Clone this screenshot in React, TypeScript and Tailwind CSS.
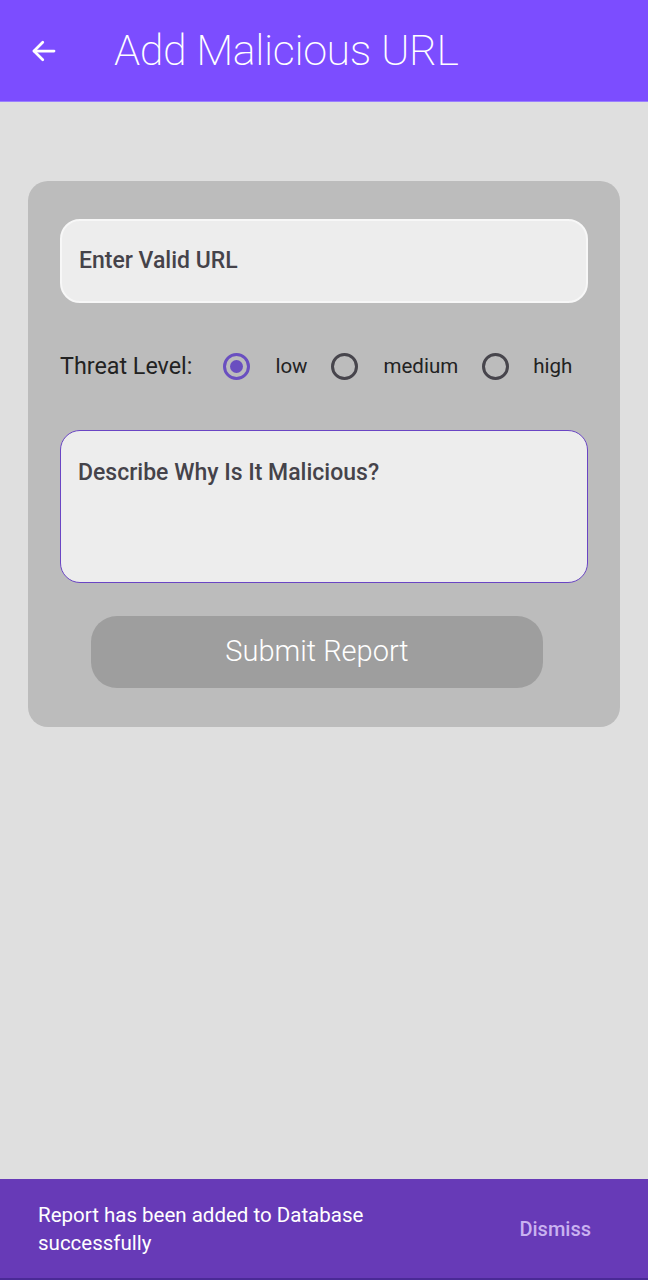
import React from "react";

function Radio({ checked }: { checked?: boolean }) {
  return (
    <div
      className={
        "flex h-[27px] w-[27px] shrink-0 items-center justify-center rounded-full border-[3px] " +
        (checked ? "border-[#6a4fc0]" : "border-[#47454c]")
      }
    >
      {checked && <div className="h-[13px] w-[13px] rounded-full bg-[#6a4fc0]" />}
    </div>
  );
}

export default function App() {
  return (
    <div
      className="flex h-[1280px] w-[648px] flex-col bg-[#dfdfdf]"
      style={{ fontFamily: "Roboto, 'Noto Sans', sans-serif" }}
    >
      <header className="flex h-[102px] shrink-0 items-center border-b border-[#9a80ff] bg-[#7c4dff]">
        <div className="ml-[29px] flex h-[30px] w-[30px] items-center justify-center">
          <svg width="30" height="30" viewBox="0 0 24 24" fill="none" stroke="white" strokeWidth="2.2" strokeLinecap="round" strokeLinejoin="round">
            <path d="M20 12H4" />
            <path d="M11 5l-7 7 7 7" />
          </svg>
        </div>
        <h1 className="ml-[55px] text-[43px] font-extralight leading-none tracking-[-0.4px] text-white">Add Malicious URL</h1>
      </header>

      <main className="flex-1 px-[28px] pt-[79px]">
        <div className="flex flex-col rounded-[20px] bg-[#bcbcbc] px-[32px] pb-[39px] pt-[38px]">
          <div className="flex h-[84px] items-center rounded-[20px] border-2 border-[#f7f7f7] bg-[#ededed] px-[17px]">
            <span className="text-[23px] font-medium text-[#45434a]">Enter Valid URL</span>
          </div>

          <div className="mt-[50px] flex h-[27px] items-center leading-none text-[#222222]">
            <span className="text-[23.3px]">Threat Level:</span>
            <div className="ml-[31px]"><Radio checked /></div>
            <span className="ml-[25px] text-[20.5px]">low</span>
            <div className="ml-[24px]"><Radio /></div>
            <span className="ml-[25px] text-[20.5px]">medium</span>
            <div className="ml-[24px]"><Radio /></div>
            <span className="ml-[24px] text-[20.5px]">high</span>
          </div>

          <div className="mt-[50px] h-[153px] rounded-[20px] border-[1.5px] border-[#6a45c4] bg-[#ededed] px-[17px] pt-[30px]">
            <span className="block text-[23px] font-medium leading-none text-[#45434a]">Describe Why Is It Malicious?</span>
          </div>

          <button className="ml-[31px] mt-[33px] flex h-[72px] w-[452px] items-center justify-center rounded-[26px] bg-[#9e9e9e]">
            <span className="text-[29px] font-light text-white">Submit Report</span>
          </button>
        </div>
      </main>

      <footer className="flex h-[101px] shrink-0 items-center justify-between border-b-2 border-[#4a2a96] bg-[#673ab7] pl-[38px] pr-[57px]">
        <p className="w-[360px] text-[20.5px] leading-[28px] text-white">Report has been added to Database successfully</p>
        <span className="text-[20px] font-medium text-[#c9b2f0]">Dismiss</span>
      </footer>
    </div>
  );
}
